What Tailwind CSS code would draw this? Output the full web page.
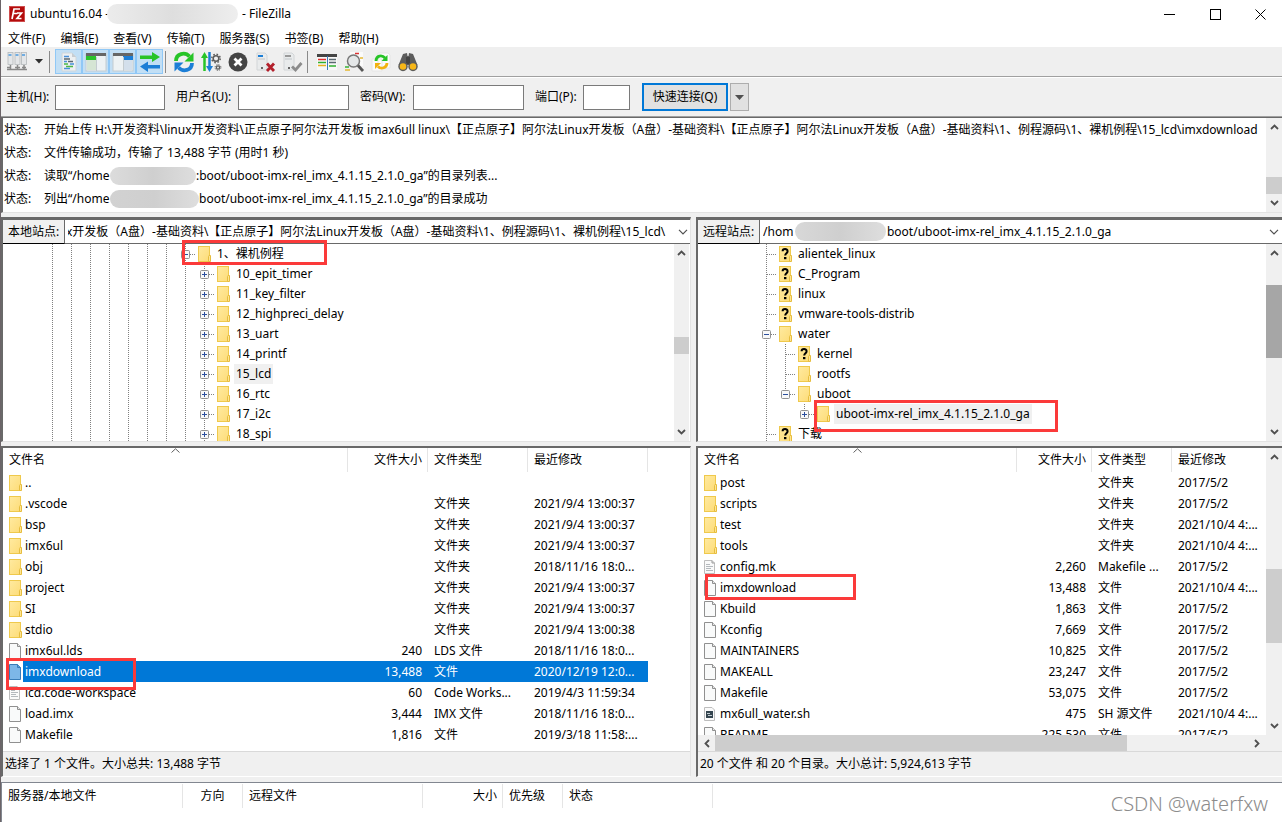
<!DOCTYPE html>
<html lang="zh-CN">
<head>
<meta charset="utf-8">
<title>ubuntu16.04 - FileZilla</title>
<script src="https://cdn.jsdelivr.net/npm/@tailwindcss/browser@4"></script>
</head>
<body class="flex h-screen flex-col overflow-hidden border-l border-[#6b6468] bg-[#f0f0f0] font-['Noto_Sans','Noto_Sans_CJK_SC',sans-serif] text-[12px] leading-5 text-black">

<svg class="absolute size-0" aria-hidden="true">
  <defs>
    <linearGradient id="gf" x1="0" y1="0" x2="1" y2="1"><stop offset="0" stop-color="#ffeaa0"/><stop offset="1" stop-color="#fddc78"/></linearGradient>
    <symbol id="folder" viewBox="0 0 13 16"><rect x=".5" y=".5" width="11" height="15" fill="url(#gf)" stroke="#efc94c"/><path d="M10.500 15.500V10.500L11 9.500H12.500V15.500Z" fill="#ffe592" stroke="#e6bd3f"/></symbol>
    <symbol id="unknown" viewBox="0 0 13 16"><rect x=".5" y=".5" width="11" height="15" fill="url(#gf)" stroke="#efc94c"/><path d="M10.500 15.500V10.500L11 9.500H12.500V15.500Z" fill="#ffe592" stroke="#e6bd3f"/><path d="M3.600 5.300C3.600 2.400 8.600 2.400 8.600 5.200C8.600 7.200 6.200 7.200 6.200 9.500" fill="none" stroke="#000" stroke-width="2"/><rect x="5" y="11" width="2.400" height="2.200"/></symbol>
    <symbol id="file" viewBox="0 0 13 16"><path d="M.5.5H8.500L11.500 3.500V15.500H.5Z" fill="#f9fafa" stroke="#909090"/><path d="M8.500.5V3.500H11.500" fill="#e8e8e8" stroke="#909090"/></symbol>
    <symbol id="filesel" viewBox="0 0 13 16"><path d="M.5.5H8.500L11.500 3.500V15.500H.5Z" fill="#7db7e8" stroke="#3a7db8"/><path d="M8.500.5V3.500H11.500" fill="#5da2db" stroke="#3a7db8"/></symbol>
    <symbol id="text" viewBox="0 0 13 16"><path d="M.5 1.500H8L10.500 4V14.500H.5Z" fill="#fafafa" stroke="#bdbdbd"/><path d="M8 1.500V4H10.500" fill="none" stroke="#999"/><path d="M2 5.500H6M2 7.500H9M2 9.500H7M2 11.500H9" stroke="#b4b9bd"/></symbol>
    <symbol id="script" viewBox="0 0 13 16"><path d="M.5 1.500H8L10.500 4V14.500H.5Z" fill="#fafafa" stroke="#bdbdbd"/><rect x="2" y="5" width="7" height="7" fill="#35454f"/><path d="M3 7.500H6M4 9.500H8" stroke="#c2cdd2"/></symbol>
    <symbol id="v" viewBox="0 0 19 20"><path d="M9.500 0V20" stroke="#808080" stroke-dasharray="1 1"/></symbol>
    <symbol id="none" viewBox="0 0 19 20"></symbol>
    <symbol id="tee" viewBox="0 0 19 20"><path d="M9.500 0V20M10 10.500H20" stroke="#808080" stroke-dasharray="1 1"/></symbol>
    <symbol id="plus" viewBox="0 0 19 20"><path d="M9.500 0V20M10 10.500H20" stroke="#808080" stroke-dasharray="1 1"/><rect x="5.500" y="6.500" width="8" height="8" rx="1" fill="#f8f8f8" stroke="#919191"/><path d="M7 10.500H12M9.500 8V13" stroke="#2b4f9e"/></symbol>
    <symbol id="minus" viewBox="0 0 19 20"><path d="M9.500 0V20M10 10.500H20" stroke="#808080" stroke-dasharray="1 1"/><rect x="5.500" y="6.500" width="8" height="8" rx="1" fill="#f8f8f8" stroke="#919191"/><path d="M7 10.500H12" stroke="#2b4f9e"/></symbol>
    <symbol id="minusend" viewBox="0 0 19 20"><path d="M9.500 0V10M10 10.500H20" stroke="#808080" stroke-dasharray="1 1"/><rect x="5.500" y="6.500" width="8" height="8" rx="1" fill="#f8f8f8" stroke="#919191"/><path d="M7 10.500H12" stroke="#2b4f9e"/></symbol>
    <symbol id="plusend" viewBox="0 0 19 20"><path d="M9.500 0V10M10 10.500H20" stroke="#808080" stroke-dasharray="1 1"/><rect x="5.500" y="6.500" width="8" height="8" rx="1" fill="#f8f8f8" stroke="#919191"/><path d="M7 10.500H12M9.500 8V13" stroke="#2b4f9e"/></symbol>
    <symbol id="up" viewBox="0 0 9 6"><path d="M1 5L4.500 1.500L8 5" fill="none" stroke="#505050" stroke-width="1.800"/></symbol>
    <symbol id="down" viewBox="0 0 9 6"><path d="M1 1L4.500 4.500L8 1" fill="none" stroke="#505050" stroke-width="1.800"/></symbol>
    <symbol id="left" viewBox="0 0 6 9"><path d="M5 1L1.500 4.500L5 8" fill="none" stroke="#505050" stroke-width="1.800"/></symbol>
    <symbol id="right" viewBox="0 0 6 9"><path d="M1 1L4.500 4.500L1 8" fill="none" stroke="#505050" stroke-width="1.800"/></symbol>
    <symbol id="sort" viewBox="0 0 9 5"><path d="M.5 4.500L4.500 .8L8.500 4.500" fill="none" stroke="#606060"/></symbol>
    <symbol id="combo" viewBox="0 0 10 6"><path d="M1 .8L5 4.800L9 .8" fill="none" stroke="#505050" stroke-width="1.200"/></symbol>
  </defs>
</svg>

<header class="flex h-7 shrink-0 items-center bg-white">
  <svg class="ml-2 size-4" viewBox="0 0 16 16"><rect width="16" height="16" fill="#b30b0b"/><rect x=".5" y=".5" width="15" height="15" fill="none" stroke="#e89090" stroke-dasharray="1 1"/><path d="M3 13L5 3H11M4.200 7.500H8.500M8 7H12.500L8 12.500H12.500" fill="none" stroke="#fff" stroke-width="1.700"/></svg>
  <h1 class="ml-[5px] flex items-center whitespace-nowrap"><span class="w-[77px]">ubuntu16.04 -</span><span class="h-5 w-[131px] rounded-full bg-gradient-to-r from-[#ececec] via-[#dedede] to-[#eeeeee]"></span><span class="ml-1">- FileZilla</span></h1>
  <div class="ml-auto flex">
    <button aria-label="最小化" class="flex h-7 w-[46px] items-center justify-center"><svg class="size-[11px]" viewBox="0 0 11 11"><path d="M0 5.500H11" stroke="#000"/></svg></button>
    <button aria-label="最大化" class="flex h-7 w-[46px] items-center justify-center"><svg class="size-[11px]" viewBox="0 0 11 11"><rect x=".5" y=".5" width="10" height="10" fill="none" stroke="#000"/></svg></button>
    <button aria-label="关闭" class="flex h-7 w-[44px] items-center justify-center"><svg class="size-[11px]" viewBox="0 0 11 11"><path d="M.5.5L10.500 10.500M10.500.5L.5 10.500" stroke="#000"/></svg></button>
  </div>
</header>

<nav class="flex h-[19px] shrink-0 items-center gap-[15px] bg-white pl-[7px] pt-[2px]">
  <button>文件(F)</button><button>编辑(E)</button><button>查看(V)</button><button>传输(T)</button><button>服务器(S)</button><button>书签(B)</button><button>帮助(H)</button>
</nav>

<div class="flex h-[30px] shrink-0 items-center border-b border-[#a0a0a0] bg-[#efefef] pl-[5px]" role="toolbar">
  <button aria-label="站点管理器" class="flex w-[22px] justify-center"><svg class="size-[22px]" viewBox="0 0 22 22"><g fill="#e4e6e8" stroke="#b4b8bb" stroke-width=".8"><rect x="2" y="1.500" width="5" height="12"/><rect x="9" y="1.500" width="5" height="12"/><rect x="15.500" y="1.500" width="5" height="12"/></g><path d="M2.500 4H5.500M9.500 4H12.500M16 4H19" stroke="#4a9ae0" stroke-width="1.500"/><path d="M4.500 14V18.500M11.500 14V18.500M18 14V18.500M1 18.500H21M1 16.500H4M9 16.500H14M16 16.500H20" stroke="#888" stroke-width="1.500"/></svg></button>
  <button aria-label="打开站点列表" class="flex w-[21px] justify-center"><svg class="h-[5px] w-2" viewBox="0 0 8 5"><path d="M0 0H8L4 4.500Z" fill="#303030"/></svg></button>
  <span class="mr-[5px] h-[22px] w-px bg-[#8a8a8a]"></span>
  <button aria-label="消息日志" aria-pressed="true" class="flex h-[25px] w-[27px] items-center justify-center border border-[#90c8f6] bg-[#c2dff5]"><svg class="size-[22px]" viewBox="0 0 22 22"><path d="M4 2H14L18 6V20H4Z" fill="#edf0f2" stroke="#cfd6da"/><path d="M14 2V6H18" fill="#c7cdd2"/><g stroke-width="1.500"><path d="M6 5.500H11M6 10.500H9M12 13H16M6 17.500H12" stroke="#4a90d9"/><path d="M6 8H12M10 10.500H15" stroke="#5c6870"/><path d="M6 13H10M8 15.500H15" stroke="#4cb848"/></g></svg></button>
  <button aria-label="本地目录树" aria-pressed="true" class="flex h-[25px] w-[27px] items-center justify-center border border-[#90c8f6] bg-[#c2dff5]"><svg class="size-[22px]" viewBox="0 0 22 22"><rect x="1" y="3" width="20" height="17" fill="#edf2f4" stroke="#c4ccd0"/><rect x="1" y="2" width="20" height="3" fill="#666"/><rect x="1" y="5" width="10" height="4" fill="#2bc32b"/><path d="M11.500 6V20" stroke="#c4ccd0"/><rect x="2" y="9" width="9" height="10" fill="#d5e5d4"/></svg></button>
  <button aria-label="远程目录树" aria-pressed="true" class="flex h-[25px] w-[27px] items-center justify-center border border-[#90c8f6] bg-[#c2dff5]"><svg class="size-[22px]" viewBox="0 0 22 22"><rect x="1" y="3" width="20" height="17" fill="#edf2f4" stroke="#c4ccd0"/><rect x="1" y="2" width="20" height="3" fill="#666"/><rect x="11" y="5" width="10" height="4" fill="#1c7ed6"/><path d="M11.500 6V20" stroke="#c4ccd0"/><rect x="12" y="9" width="8" height="10" fill="#d3dfeb"/></svg></button>
  <button aria-label="传输队列" aria-pressed="true" class="flex h-[25px] w-[27px] items-center justify-center border border-[#90c8f6] bg-[#c2dff5]"><svg class="size-[22px]" viewBox="0 0 22 22"><path d="M1 4.500H13V1L21 6L13 11V8H1Z" fill="#27c427"/><path d="M21 14H9V10.500L1 15.500L9 21V17.500H21Z" fill="#1c7ed6"/></svg></button>
  <span class="ml-[2px] mr-1 h-[22px] w-px bg-[#8a8a8a]"></span>
  <button aria-label="刷新" class="flex w-[27px] justify-center"><svg class="size-[22px]" viewBox="0 0 22 22"><path d="M3 10C3 2.500 12 .5 16.500 5.500" fill="none" stroke="#27c427" stroke-width="3.800"/><path d="M20.500 1.500V10.500H11.500Z" fill="#27c427"/><path d="M19 12C19 19.500 10 21.500 5.500 16.500" fill="none" stroke="#1c7ed6" stroke-width="3.800"/><path d="M1.500 20.500V11.500H10.500Z" fill="#1c7ed6"/></svg></button>
  <button aria-label="处理队列" class="flex w-[27px] justify-center"><svg class="size-[22px]" viewBox="0 0 22 22"><path d="M4.500 20V4" stroke="#27c427" stroke-width="2.500"/><path d="M1 7L4.500 1L8 7Z" fill="#27c427"/><path d="M9.500 1V17" stroke="#1c7ed6" stroke-width="2.500"/><path d="M6 15L9.500 21L13 15Z" fill="#1c7ed6"/><g fill="none" stroke="#5c5c5c"><circle cx="16" cy="7.500" r="2.800" stroke-width="1.500"/><circle cx="16" cy="7.500" r="4.200" stroke-width="1.500" stroke-dasharray="1.600 1.700"/><circle cx="18" cy="16.500" r="1.600" stroke-width="1.300"/><circle cx="18" cy="16.500" r="2.900" stroke-dasharray="1.200 1.100"/></g></svg></button>
  <button aria-label="取消" class="flex w-[27px] justify-center"><svg class="size-[22px]" viewBox="0 0 22 22"><circle cx="11" cy="11" r="9.500" fill="#454545"/><path d="M7.500 7.500L14.500 14.500M14.500 7.500L7.500 14.500" stroke="#fff" stroke-width="2.800"/></svg></button>
  <button aria-label="断开连接" class="flex w-[27px] justify-center"><svg class="size-[22px]" viewBox="0 0 22 22"><path d="M3 2H11L13 4V19H3Z" fill="#e9ebec" stroke="#d2d5d7"/><path d="M4 5H9" stroke="#1c7ed6" stroke-width="2"/><path d="M4 8H11" stroke="#bfc4c7"/><rect x="7" y="16" width="2" height="2" fill="#666"/><path d="M13 12.500L20 20M20 12.500L13 20" stroke="#b3202c" stroke-width="2.800"/></svg></button>
  <button aria-label="重新连接" class="flex w-[27px] justify-center"><svg class="size-[22px]" viewBox="0 0 22 22"><path d="M3 2H11L13 4V19H3Z" fill="#e9ebec" stroke="#d2d5d7"/><path d="M4 5H10" stroke="#999" stroke-width="2"/><path d="M4 8H11" stroke="#bfc4c7"/><rect x="7" y="16" width="2" height="2" fill="#666"/><path d="M11 15.500L14.500 19L20.500 12" fill="none" stroke="#8c8c8c" stroke-width="2.800"/></svg></button>
  <span class="ml-[2px] mr-[5px] h-[22px] w-px bg-[#8a8a8a]"></span>
  <button aria-label="文件名过滤器" class="flex w-[27px] justify-center"><svg class="size-[22px]" viewBox="0 0 22 22"><rect x="1" y="3" width="20" height="16" fill="#f8f8f8"/><path d="M1 4.500H21" stroke="#454545" stroke-width="3"/><path d="M2 8.500H10" stroke="#e03030" stroke-width="1.500"/><path d="M2 11.500H10M13 15H20" stroke="#30b030" stroke-width="1.500"/><path d="M2 14.500H10" stroke="#e8b020" stroke-width="1.500"/><path d="M13 8.500H20M13 11.500H20" stroke="#5a6870" stroke-width="1.500"/><path d="M11.500 5V19" stroke="#3b79bb"/></svg></button>
  <button aria-label="目录比较" class="flex w-[27px] justify-center"><svg class="size-[22px]" viewBox="0 0 22 22"><path d="M7 1H20V15H7Z" fill="#fafafa"/><path d="M12 2.500H16" stroke="#d33" stroke-width="1.500"/><path d="M17 7H20" stroke="#e6b830" stroke-width="1.500"/><path d="M2 16H6" stroke="#35b035" stroke-width="1.500"/><path d="M2 19H7" stroke="#e6b830" stroke-width="1.500"/><circle cx="10.500" cy="10" r="6" fill="#e4e7e8" stroke="#777" stroke-width="1.500"/><path d="M15 14.500L20 20" stroke="#555" stroke-width="2.800"/></svg></button>
  <button aria-label="同步浏览" class="flex w-[27px] justify-center"><svg class="size-[22px]" viewBox="0 0 22 22"><path d="M8 2H18L20 4V17H8ZM2 8H12V20H2Z" fill="#fbfbfb" stroke="#e5e5e5"/><path d="M6 10C6 4.500 12 3.500 15 7" fill="none" stroke="#27c427" stroke-width="2.800"/><path d="M17.500 4V10H11.500Z" fill="#27c427"/><path d="M17 12C17 17 11 18.500 8 15.500" fill="none" stroke="#f2b211" stroke-width="2.800"/><path d="M5 18V12H11Z" fill="#f2b211"/></svg></button>
  <button aria-label="查找文件" class="flex w-[27px] justify-center"><svg class="size-[22px]" viewBox="0 0 22 22"><path d="M6 3L10 2L10.500 5H11.500L12 2L16 3L20.500 14H1.500Z" fill="#5c5c5c"/><rect x="9" y="6" width="4" height="7" fill="#444"/><circle cx="6" cy="15.500" r="4" fill="#f7b718" stroke="#5c5c5c" stroke-width="1.500"/><circle cx="16" cy="15.500" r="4" fill="#f7b718" stroke="#5c5c5c" stroke-width="1.500"/></svg></button>
</div>

<form class="flex h-[39px] shrink-0 items-center border-t border-white pl-[5px]">
  <label for="host" class="w-[49px] shrink-0 whitespace-nowrap">主机(H):</label><input id="host" class="h-[25px] w-[110px] border border-[#7a7a7a] bg-white">
  <label for="user" class="ml-[11px] w-[62px] shrink-0 whitespace-nowrap">用户名(U):</label><input id="user" class="h-[25px] w-[111px] border border-[#7a7a7a] bg-white">
  <label for="pass" class="ml-[11px] w-[53px] shrink-0 whitespace-nowrap">密码(W):</label><input id="pass" type="password" class="h-[25px] w-[111px] border border-[#7a7a7a] bg-white">
  <label for="port" class="ml-[11px] w-[48px] shrink-0 whitespace-nowrap">端口(P):</label><input id="port" class="h-[25px] w-[47px] border border-[#7a7a7a] bg-white">
  <button type="button" class="ml-3 h-7 w-[86px] border-2 border-[#0078d7] bg-[#e1e1e1]">快速连接(Q)</button>
  <button type="button" aria-label="快速连接历史" class="ml-[2px] flex h-7 w-[19px] items-center justify-center border border-[#adadad] bg-[#e1e1e1]"><svg class="h-[5px] w-[9px]" viewBox="0 0 9 5"><path d="M0 0H9L4.500 5Z" fill="#505050"/></svg></button>
</form>

<section aria-label="消息日志" class="flex h-[97px] shrink-0 border-t border-[#a0a0a0]">
  <div class="flex min-w-0 flex-1 border-b border-l-2 border-t border-b-[#e3e3e3] border-l-[#696969] border-t-[#696969] bg-white">
    <div class="min-w-0 flex-1 overflow-hidden whitespace-nowrap leading-[23px]">
      <div class="flex"><span class="w-[41px] shrink-0 pl-px">状态:</span><span>开始上传 H:\开发资料\linux开发资料\正点原子阿尔法开发板 imax6ull linux\【正点原子】阿尔法Linux开发板（A盘）-基础资料\【正点原子】阿尔法Linux开发板（A盘）-基础资料\1、例程源码\1、裸机例程\15_lcd\imxdownload</span></div>
      <div class="flex"><span class="w-[41px] shrink-0 pl-px">状态:</span><span>文件传输成功，传输了 13,488 字节 (用时1 秒)</span></div>
      <div class="flex items-center"><span class="w-[41px] shrink-0 pl-px">状态:</span><span class="w-[66px]">读取“/home</span><span class="h-[18px] w-[86px] rounded-full bg-gradient-to-r from-[#dcdcdc] via-[#cfcfcf] to-[#dedede]"></span><span>:boot/uboot-imx-rel_imx_4.1.15_2.1.0_ga”的目录列表...</span></div>
      <div class="flex items-center"><span class="w-[41px] shrink-0 pl-px">状态:</span><span class="w-[66px]">列出“/home</span><span class="h-[18px] w-[89px] rounded-full bg-gradient-to-r from-[#d2d2d2] via-[#cfcfcf] to-[#dedede]"></span><span>boot/uboot-imx-rel_imx_4.1.15_2.1.0_ga”的目录成功</span></div>
    </div>
    <div class="flex w-4 shrink-0 flex-col items-center bg-[#f0f0f0] py-[6px]"><svg class="h-[6px] w-[9px]"><use href="#up"/></svg><div class="mt-auto h-[17px] w-full bg-[#cdcdcd]"></div><svg class="mt-[6px] h-[6px] w-[9px]"><use href="#down"/></svg></div>
  </div>
</section>

<main class="mt-1 grid min-h-0 flex-1 grid-cols-[minmax(0,690fr)_minmax(0,586fr)] grid-rows-[225px_minmax(0,1fr)] gap-x-[5px] gap-y-1">
  <section aria-label="本地站点" class="relative flex min-h-0 flex-col border-b border-l-2 border-r border-t-[3px] border-[#696969] border-b-[#e3e3e3] border-r-[#e3e3e3] bg-white">
    <div class="flex h-6 shrink-0 items-stretch">
      <label for="local" class="w-[62px] shrink-0 border-b border-r border-b-black border-r-[#696969] bg-[#f0f0f0] pl-[5px] leading-[23px]">本地站点:</label>
      <div class="flex min-w-0 flex-1 items-center border-b border-[#696969]">
        <input id="local" class="h-5 min-w-0 flex-1 pl-[3px] -indent-[2px]" value="x开发板（A盘）-基础资料\【正点原子】阿尔法Linux开发板（A盘）-基础资料\1、例程源码\1、裸机例程\15_lcd\">
        <button aria-label="展开" class="mr-[2px]"><svg class="h-[6px] w-[10px]"><use href="#combo"/></svg></button>
      </div>
    </div>
    <div class="flex min-h-0 flex-1">
      <div id="ltree" role="tree" class="min-w-0 flex-1 overflow-hidden pl-[40px]"></div>
      <div class="mr-px flex w-[15px] shrink-0 flex-col items-center bg-[#f0f0f0] py-[6px]"><svg class="h-[6px] w-[9px]"><use href="#up"/></svg><div class="mt-[81px] h-[17px] w-full bg-[#cdcdcd]"></div><svg class="mt-auto h-[6px] w-[9px]"><use href="#down"/></svg></div>
    </div>
    <div class="pointer-events-none absolute left-[179px] top-5 h-[25px] w-[145px] border-[3px] border-[#fb3a3a]"></div>
  </section>

  <section aria-label="远程站点" class="relative flex min-h-0 flex-col border-b border-l-2 border-t-[3px] border-[#696969] border-b-[#e3e3e3] bg-white">
    <div class="flex h-6 shrink-0 items-stretch">
      <label for="remote" class="w-[62px] shrink-0 border-b border-r border-b-black border-r-[#696969] bg-[#f0f0f0] pl-[5px] leading-[23px]">远程站点:</label>
      <div class="relative flex min-w-0 flex-1 items-center border-b border-[#696969]">
        <input id="remote" class="h-5 min-w-0 flex-1 pl-[3px]" value="/hom&nbsp;&nbsp;&nbsp;&nbsp;&nbsp;&nbsp;&nbsp;&nbsp;&nbsp;&nbsp;&nbsp;&nbsp;&nbsp;&nbsp;&nbsp;&nbsp;&nbsp;&nbsp;&nbsp;&nbsp;&nbsp;&nbsp;&nbsp;&nbsp;&nbsp;&nbsp;&nbsp;&nbsp;&nbsp;&nbsp;boot/uboot-imx-rel_imx_4.1.15_2.1.0_ga">
        <span class="absolute left-[35px] top-[2px] h-[19px] w-[91px] rounded-full bg-gradient-to-r from-[#d8d8d8] via-[#cfcfcf] to-[#dedede]"></span>
        <button aria-label="展开" class="mr-[3px]"><svg class="h-[6px] w-[10px]"><use href="#combo"/></svg></button>
      </div>
    </div>
    <div class="flex min-h-0 flex-1">
      <div id="rtree" role="tree" class="min-w-0 flex-1 overflow-hidden pl-[59px]"></div>
      <div class="flex w-4 shrink-0 flex-col items-center bg-[#f0f0f0] py-[6px]"><svg class="h-[6px] w-[9px]"><use href="#up"/></svg><div class="mt-[29px] h-[73px] w-full bg-[#a6a6a6]"></div><svg class="mt-auto h-[6px] w-[9px]"><use href="#down"/></svg></div>
    </div>
    <div class="pointer-events-none absolute left-[116px] top-[180px] h-8 w-[244px] border-[3px] border-[#fb3a3a]"></div>
  </section>

  <section aria-label="本地文件" class="relative flex min-h-0 flex-col border-b border-l-2 border-r border-t-2 border-[#696969] border-b-white border-r-[#e3e3e3] bg-white">
    <div class="min-h-0 flex-1 overflow-hidden">
      <table class="w-[645px] table-fixed border-separate border-spacing-0 whitespace-nowrap">
        <colgroup><col class="w-[345px]"><col class="w-[80px]"><col class="w-[100px]"><col class="w-[120px]"></colgroup>
        <thead><tr class="h-6 text-left"><th class="relative border-r border-[#e5e5e5] p-0 pl-[6px] font-normal">文件名<svg class="absolute left-[168px] top-0 h-[5px] w-[9px]"><use href="#sort"/></svg></th><th class="border-r border-[#e5e5e5] p-0 pr-[5px] text-right font-normal">文件大小</th><th class="border-r border-[#e5e5e5] p-0 pl-[6px] font-normal">文件类型</th><th class="border-r border-[#e5e5e5] p-0 pl-[6px] font-normal">最近修改</th></tr></thead>
        <tbody id="llist"></tbody>
      </table>
    </div>
    <p class="h-[25px] shrink-0 border-t border-[#d9d9d9] bg-[#f0f0f0] pl-[2px] leading-6">选择了 1 个文件。大小总共: 13,488 字节</p>
    <div class="pointer-events-none absolute left-[3px] top-[210px] h-8 w-[130px] border-[3px] border-[#fb3a3a]"></div>
  </section>

  <section aria-label="远程文件" class="relative flex min-h-0 flex-col border-b border-l-2 border-t-2 border-[#696969] border-b-white bg-white">
    <div class="flex min-h-0 flex-1">
      <div class="min-w-0 flex-1 overflow-hidden">
        <table class="w-full table-fixed border-separate border-spacing-0 whitespace-nowrap">
          <colgroup><col><col class="w-[75px]"><col class="w-[80px]"><col class="w-[94px]"></colgroup>
          <thead><tr class="h-6 text-left"><th class="relative border-r border-[#e5e5e5] p-0 pl-[6px] font-normal">文件名<svg class="absolute left-[155px] top-0 h-[5px] w-[9px]"><use href="#sort"/></svg></th><th class="border-r border-[#e5e5e5] p-0 pr-[5px] text-right font-normal">文件大小</th><th class="border-r border-[#e5e5e5] p-0 pl-[6px] font-normal">文件类型</th><th class="p-0 pl-[6px] font-normal">最近修改</th></tr></thead>
          <tbody id="rlist"></tbody>
        </table>
      </div>
      <div class="flex w-4 shrink-0 flex-col items-center bg-[#f0f0f0] py-[6px]"><svg class="h-[6px] w-[9px]"><use href="#up"/></svg><div class="mt-[109px] h-[74px] w-full bg-[#cdcdcd]"></div><svg class="mt-auto h-[6px] w-[9px]"><use href="#down"/></svg></div>
    </div>
    <div class="flex h-4 shrink-0 items-center bg-[#f0f0f0] pr-[22px]"><svg class="ml-[6px] mr-[5px] h-[9px] w-[6px]"><use href="#left"/></svg><div class="h-full w-[412px] bg-[#cdcdcd]"></div><svg class="ml-auto h-[9px] w-[6px]"><use href="#right"/></svg></div>
    <p class="h-[25px] shrink-0 border-t border-[#d9d9d9] bg-[#f0f0f0] pl-[2px] leading-6">20 个文件 和 20 个目录。大小总计: 5,924,613 字节</p>
    <div class="pointer-events-none absolute left-[7px] top-[126px] h-[26px] w-[151px] border-[3px] border-[#fb3a3a]"></div>
  </section>
</main>

<footer class="mt-[5px] flex h-10 shrink-0 items-start justify-between border-l border-t border-[#828790] bg-white">
  <table class="mt-px w-[711px] table-fixed border-separate border-spacing-0 whitespace-nowrap">
    <colgroup><col class="w-[181px]"><col class="w-[60px]"><col class="w-[180px]"><col class="w-[80px]"><col class="w-[60px]"><col class="w-[150px]"></colgroup>
    <thead><tr class="h-6 text-left"><th class="border-r border-[#e5e5e5] p-0 pl-[6px] font-normal">服务器/本地文件</th><th class="border-r border-[#e5e5e5] p-0 text-center font-normal">方向</th><th class="border-r border-[#e5e5e5] p-0 pl-[6px] font-normal">远程文件</th><th class="border-r border-[#e5e5e5] p-0 pr-[5px] text-right font-normal">大小</th><th class="border-r border-[#e5e5e5] p-0 pl-[6px] font-normal">优先级</th><th class="border-r border-[#e5e5e5] p-0 pl-[6px] font-normal">状态</th></tr></thead>
  </table>
  <p class="mr-[14px] mt-[6px] text-[20px] font-light leading-[30px] text-[#8c8c8c]">CSDN @waterfxw</p>
</footer>

<script>
  // Tree rows: [guide cells, icon, label, selected]
  const row = ([cells, icon, label, sel]) =>
    `<div role="treeitem" class="flex h-5 items-center whitespace-nowrap">${cells.split(' ').map(c => `<svg class="h-5 w-[19px] shrink-0"><use href="#${c}"/></svg>`).join('')}<svg class="ml-[3px] h-4 w-[13px] shrink-0"><use href="#${icon}"/></svg><span class="${sel ? 'ml-1 h-5 bg-[#f0f0f0] px-[2px]' : 'ml-1 h-5 px-[2px]'}">${label}</span></div>`;
  const g = 'v v v v v v v ';
  document.getElementById('ltree').innerHTML = [[g + 'minus', 'folder', '1、裸机例程'],
    ...['10_epit_timer', '11_key_filter', '12_highpreci_delay', '13_uart', '14_printf', '15_lcd', '16_rtc', '17_i2c', '18_spi'].map(n => [g + 'v plus', 'folder', n, n === '15_lcd'])].map(row).join('');
  document.getElementById('rtree').innerHTML = [
    ['tee', 'unknown', 'alientek_linux'], ['tee', 'unknown', 'C_Program'], ['tee', 'unknown', 'linux'], ['tee', 'unknown', 'vmware-tools-distrib'],
    ['minus', 'folder', 'water'], ['v tee', 'unknown', 'kernel'], ['v tee', 'folder', 'rootfs'], ['v minusend', 'folder', 'uboot'],
    ['v none plusend', 'folder', 'uboot-imx-rel_imx_4.1.15_2.1.0_ga', true], ['tee', 'unknown', '下载']].map(row).join('');

  // List rows: [icon, name, size, type, modified]
  const file = ([icon, name, size, type, date]) => {
    const sel = icon === 'filesel';
    return `<tr class="h-[21px] leading-[21px]"><td class="p-0"><div class="flex h-[21px] items-center pl-[6px]"><svg class="h-4 w-[13px] shrink-0"><use href="#${icon}"/></svg><span class="${sel ? 'ml-px h-[21px] flex-1 bg-[#0078d7] pl-[2px] text-white' : 'ml-px h-[21px] flex-1 pl-[2px]'}">${name}</span></div></td>` +
      `<td class="${sel ? 'bg-[#0078d7] p-0 pr-[6px] text-right text-white' : 'p-0 pr-[6px] text-right'}">${size}</td>` +
      [type, date].map(t => `<td class="${sel ? 'bg-[#0078d7] p-0 pl-[6px] text-white' : 'p-0 pl-[6px]'}">${t}</td>`).join('') + '</tr>';
  };
  const F = '文件夹', D = '2021/9/4 13:00:37';
  document.getElementById('llist').innerHTML = [
    ['folder', '..', '', '', ''], ['folder', '.vscode', '', F, D], ['folder', 'bsp', '', F, D], ['folder', 'imx6ul', '', F, D],
    ['folder', 'obj', '', F, '2018/11/16 18:0...'], ['folder', 'project', '', F, D], ['folder', 'SI', '', F, D], ['folder', 'stdio', '', F, '2021/9/4 13:00:38'],
    ['file', 'imx6ul.lds', '240', 'LDS 文件', '2018/11/16 18:0...'], ['filesel', 'imxdownload', '13,488', '文件', '2020/12/19 12:0...'],
    ['text', 'lcd.code-workspace', '60', 'Code Works...', '2019/4/3 11:59:34'], ['file', 'load.imx', '3,444', 'IMX 文件', '2018/11/16 18:0...'],
    ['file', 'Makefile', '1,816', '文件', '2019/3/18 11:58:...']].map(file).join('');
  const R = '2017/5/2', N = '2021/10/4 4:...';
  document.getElementById('rlist').innerHTML = [
    ['folder', 'post', '', F, R], ['folder', 'scripts', '', F, R], ['folder', 'test', '', F, N], ['folder', 'tools', '', F, N],
    ['text', 'config.mk', '2,260', 'Makefile ...', R], ['file', 'imxdownload', '13,488', '文件', N], ['file', 'Kbuild', '1,863', '文件', R],
    ['file', 'Kconfig', '7,669', '文件', R], ['file', 'MAINTAINERS', '10,825', '文件', R], ['file', 'MAKEALL', '23,247', '文件', R],
    ['file', 'Makefile', '53,075', '文件', R], ['script', 'mx6ull_water.sh', '475', 'SH 源文件', N], ['file', 'README', '225,530', '文件', R]].map(file).join('');
</script>
</body>
</html>
